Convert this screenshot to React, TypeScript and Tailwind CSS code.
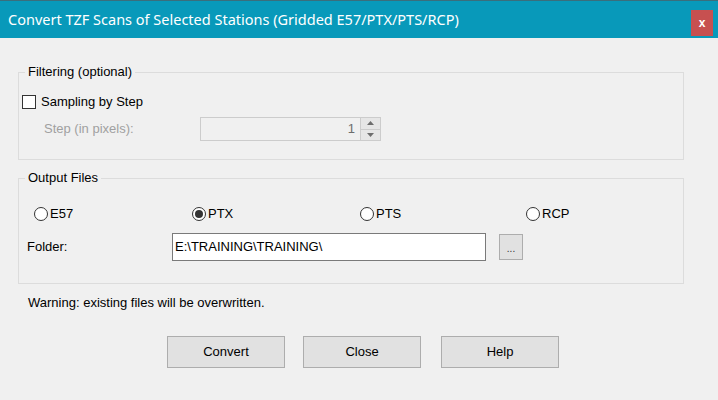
import React from "react";

const font = { fontFamily: '"Liberation Sans", Arial, sans-serif' };

function Radio({ checked, label }: { checked?: boolean; label: string }) {
  return (
    <div className="flex items-center h-[15px]">
      <div className="w-[14px] h-[14px] rounded-full border border-[#333333] bg-white flex items-center justify-center">
        {checked && <div className="w-[8px] h-[8px] rounded-full bg-[#333333]" />}
      </div>
      <span className="ml-[2px] text-[13px] text-black leading-[15px]">{label}</span>
    </div>
  );
}

function Btn({ label, className }: { label: string; className?: string }) {
  return (
    <div
      className={
        "w-[118px] h-[32px] bg-[#e1e1e1] border border-[#adadad] flex items-center justify-center text-[13px] text-black " +
        (className || "")
      }
    >
      {label}
    </div>
  );
}

export default function App() {
  return (
    <div className="w-[718px] h-[400px] bg-[#f0f0f0] flex flex-col overflow-hidden" style={font}>
      {/* Title bar */}
      <div className="h-[38px] bg-[#0899ba] border-t border-[#3a6e7c] flex items-center pl-[8px] pr-[5px]">
        <span
          className="text-white text-[14.5px] flex-1"
          style={{ fontFamily: '"Noto Sans", "Open Sans", sans-serif' }}
        >
          Convert TZF Scans of Selected Stations (Gridded E57/PTX/PTS/RCP)
        </span>
        <div className="w-[22px] h-[26px] bg-[#c75050] flex items-center justify-center mt-[6px] text-white text-[12px] font-bold">
          x
        </div>
      </div>

      <div className="flex flex-col pl-[18px] pr-[34px]">
        {/* Filtering group */}
        <div className="relative mt-[34px] h-[88px] border border-[#dcdcdc] pt-[21px] pl-[3px]">
          <span className="absolute left-[6px] top-[-9px] px-[3px] bg-[#f0f0f0] text-[13px] leading-[16px] text-black">
            Filtering (optional)
          </span>
          <div className="flex items-center h-[15px]">
            <div className="w-[14px] h-[14px] border border-[#333333] bg-white" />
            <span className="ml-[5px] text-[13px] text-black">Sampling by Step</span>
          </div>
          <div className="flex items-center mt-[8px]">
            <span className="ml-[22px] w-[156px] text-[13px] text-[#a0a0a0]">Step (in pixels):</span>
            <div className="w-[181px] h-[24px] border border-[#cccccc] bg-[#f0f0f0] flex">
              <div className="flex-1 flex items-center justify-end pr-[5px] text-[13px] text-[#6d6d6d]">1</div>
              <div className="w-[20px] flex flex-col border-l border-[#cccccc]">
                <div className="flex-1 bg-[#e6e6e6] border-b border-[#cccccc] flex items-center justify-center">
                  <svg width="7" height="4" viewBox="0 0 7 4">
                    <polygon points="0,4 7,4 3.5,0" fill="#6d6d6d" />
                  </svg>
                </div>
                <div className="flex-1 bg-[#e6e6e6] flex items-center justify-center">
                  <svg width="7" height="4" viewBox="0 0 7 4">
                    <polygon points="0,0 7,0 3.5,4" fill="#6d6d6d" />
                  </svg>
                </div>
              </div>
            </div>
          </div>
        </div>

        {/* Output files group */}
        <div className="relative mt-[18px] h-[106px] border border-[#dcdcdc] pt-[27px]">
          <span className="absolute left-[6px] top-[-9px] px-[3px] bg-[#f0f0f0] text-[13px] leading-[16px] text-black">
            Output Files
          </span>
          <div className="flex pl-[15px]">
            <div className="w-[158px]">
              <Radio label="E57" />
            </div>
            <div className="w-[168px]">
              <Radio checked label="PTX" />
            </div>
            <div className="w-[166px]">
              <Radio label="PTS" />
            </div>
            <div>
              <Radio label="RCP" />
            </div>
          </div>
          <div className="flex items-center mt-[12px] pl-[8px]">
            <span className="w-[145px] text-[13px] text-black">Folder:</span>
            <div className="w-[314px] h-[28px] border border-[#7a7a7a] bg-white flex items-center pl-[2px] text-[13px] text-black">
              E:\TRAINING\TRAINING\
            </div>
            <div className="ml-[13px] w-[24px] h-[26px] bg-[#e1e1e1] border border-[#adadad] flex items-center justify-center text-[10px] text-[#333333] pt-[3px]">
              ...
            </div>
          </div>
        </div>

        <div className="mt-[11px] pl-[10px] text-[13px] text-black leading-[15px]">
          Warning: existing files will be overwritten.
        </div>

        <div className="flex mt-[26px] pl-[149px]">
          <Btn label="Convert" />
          <Btn label="Close" className="ml-[18px]" />
          <Btn label="Help" className="ml-[20px]" />
        </div>
      </div>
    </div>
  );
}
